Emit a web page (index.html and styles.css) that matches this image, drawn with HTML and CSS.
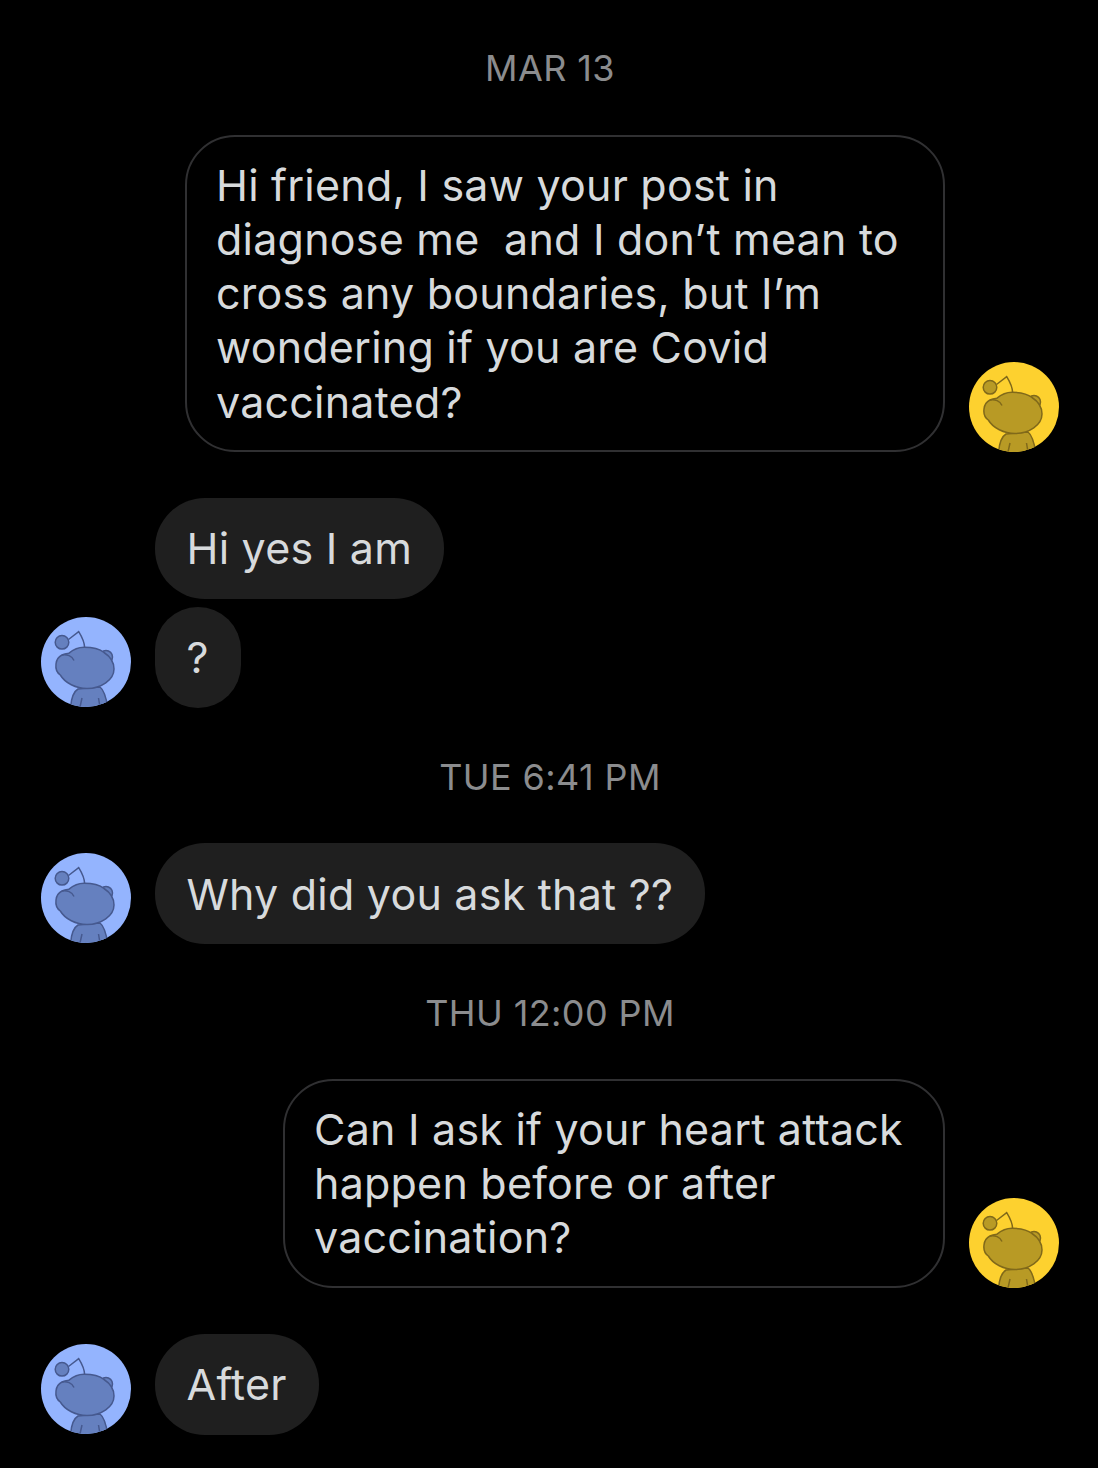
FILE: index.html
```html
<!DOCTYPE html>
<html lang="en">
<head>
    <meta charset="UTF-8">
    <meta name="viewport" content="width=device-width, initial-scale=1.0">
    <title>Messages</title>
    <link rel="stylesheet" href="styles.css">
</head>
<body>

<svg class="sprite" width="0" height="0">
    <defs>
        <clipPath id="avatarClip"><circle cx="45" cy="45" r="45"/></clipPath>
        <symbol id="snoo" viewBox="0 0 90 90">
            <circle class="snoo-bg" cx="45" cy="45" r="45"/>
            <g clip-path="url(#avatarClip)" class="snoo-line">
                <path class="snoo-line-only" d="M27.5 22.5 L37.7 14.7 C41 20 43.5 25 43.7 31"/>
                <circle cx="21" cy="25.3" r="6.8"/>
                <path d="M29.5 92 C30 82 32 75 37 72 L59 70 C63 73 65 79 67 92 Z"/>
                <path class="snoo-line-only" d="M39 90 L41 81 M59 90 L57.5 81"/>
                <circle cx="65" cy="40" r="6.5"/>
                <path d="M27.7 36.3 C33 32 37 30.3 43 30.3 C51 30.3 58 31.5 63 35.5 C70 40 73 46 73 52 C73 63 60 71.5 46 71.5 C35 71.5 24 66 19.3 58 C15 55 14.5 51 15 47 C15.5 42 18 39.5 21 38 C23.5 36.8 26 36.5 27.7 36.3 Z"/>
                <path class="snoo-line-only" d="M21 38 C26 37 31 39 33 43.5"/>
            </g>
        </symbol>
    </defs>
</svg>

<div class="thread">
    <div class="stamp">MAR 13</div>

    <div class="row row-out">
        <div class="bubble bubble-out bubble-wide">Hi friend, I saw your post in diagnose me &nbsp;and I don’t mean to cross any boundaries, but I’m wondering if you are Covid vaccinated?</div>
        <svg class="avatar avatar-yellow"><use href="#snoo"/></svg>
    </div>

    <div class="row row-in">
        <svg class="avatar avatar-blue"><use href="#snoo"/></svg>
        <div class="bubble-stack">
            <div class="bubble">Hi yes I am</div>
            <div class="bubble">?</div>
        </div>
    </div>

    <div class="stamp stamp-after">TUE 6:41 PM</div>

    <div class="row row-in">
        <svg class="avatar avatar-blue"><use href="#snoo"/></svg>
        <div class="bubble">Why did you ask that ??</div>
    </div>

    <div class="stamp stamp-after">THU 12:00 PM</div>

    <div class="row row-out">
        <div class="bubble bubble-out bubble-medium">Can I ask if your heart attack happen before or after vaccination?</div>
        <svg class="avatar avatar-yellow"><use href="#snoo"/></svg>
    </div>

    <div class="row row-in">
        <svg class="avatar avatar-blue"><use href="#snoo"/></svg>
        <div class="bubble">After</div>
    </div>
</div>

</body>
</html>
```
FILE: styles.css
```css
* {
    margin: 0;
    padding: 0;
    box-sizing: border-box;
}

body {
    background: #000000;
    color: #d7dadc;
    font-family: 'Inter', 'Liberation Sans', sans-serif;
    min-height: 100vh;
}

.sprite {
    position: absolute;
}

.thread {
    padding: 46px 39px 34px 41px;
}

/* Date separators */
.stamp {
    font-size: 36px;
    line-height: 44px;
    color: #8b8c8e;
    text-align: center;
    margin-bottom: 45px;
    letter-spacing: 0.4px;
}

.stamp-after {
    margin-top: 47px;
    margin-bottom: 44px;
}

.row {
    display: flex;
    align-items: flex-end;
    gap: 24px;
}

.row-out {
    justify-content: flex-end;
}

.row-out + .row-in {
    margin-top: 46px;
}

.bubble-stack {
    display: flex;
    flex-direction: column;
    align-items: flex-start;
    gap: 7.5px;
}

.bubble {
    background: #1f1f1f;
    border-radius: 50px;
    font-size: 43px;
    line-height: 54.3px;
    padding: 23.5px 32px 23.5px 31.5px;
    letter-spacing: 0.22px;
    min-width: 85px;
    text-align: center;
}

.bubble-out {
    background: transparent;
    border: 2px solid #303032;
    padding: 20.5px 31px 21px 29px;
    text-align: left;
}

.bubble-wide {
    width: 760px;
}

.bubble-medium {
    width: 662px;
}

.avatar {
    width: 90px;
    height: 90px;
    flex-shrink: 0;
}

.avatar-yellow {
    --bg: #fdd12f;
    --body: #b89a25;
    --line: #80691a;
}

.avatar-blue {
    --bg: #94b4fe;
    --body: #6580bf;
    --line: #46598f;
    margin-bottom: 1px;
}

.snoo-bg {
    fill: var(--bg);
}

.snoo-line {
    fill: var(--body);
    stroke: var(--line);
    stroke-width: 1.5;
}

.snoo-line-only {
    fill: none;
}
```
